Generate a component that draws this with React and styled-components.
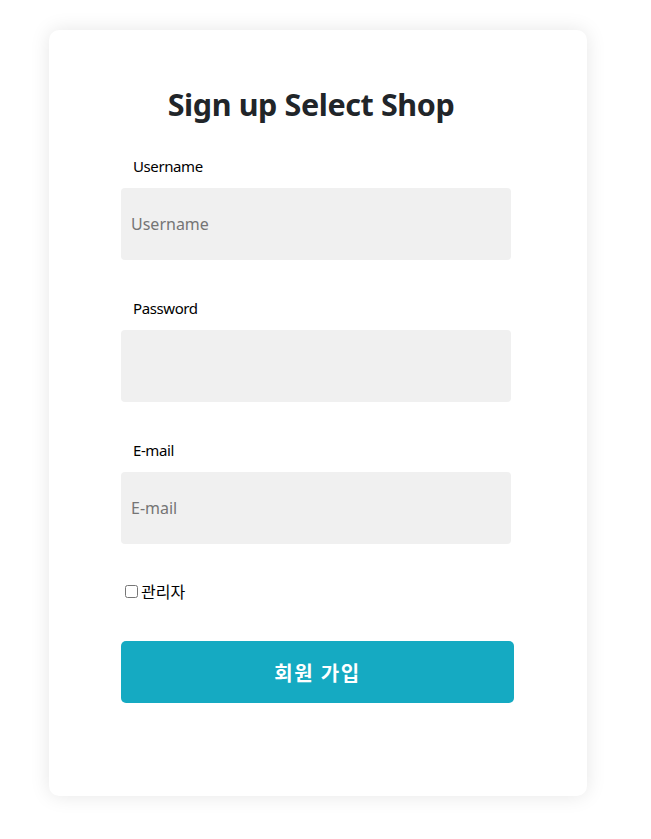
import React from "react";
import styled, { createGlobalStyle } from "styled-components";

const GlobalStyle = createGlobalStyle`
  body {
    margin: 0;
    background: #ffffff;
    font-family: "Noto Sans", "Noto Sans CJK KR", sans-serif;
  }
`;

const Page = styled.div`
  padding: 30px 0 30px 49px;
`;

const Card = styled.div`
  width: 538px;
  height: 766px;
  box-sizing: border-box;
  background: #ffffff;
  border-radius: 10px;
  box-shadow: 0 0 20px rgba(0, 0, 0, 0.1);
  padding: 52px 0 0 72px;
`;

const Form = styled.form`
  width: 393px;
  display: flex;
  flex-direction: column;
`;

const Title = styled.h2`
  margin: 0 0 30px;
  width: 380px;
  text-align: center;
  font-size: 30.5px;
  line-height: 44px;
  font-weight: 700;
  color: #212529;
  letter-spacing: -0.4px;
`;

const Field = styled.div`
  display: flex;
  flex-direction: column;
  margin-bottom: 38px;
`;

const Label = styled.label`
  padding-left: 12px;
  font-size: 15px;
  line-height: 20px;
  color: #000000;
  letter-spacing: -0.4px;
  margin-bottom: 12px;
`;

const Input = styled.input`
  width: 390px;
  height: 72px;
  box-sizing: border-box;
  border: none;
  border-radius: 4px;
  background: #f0f0f0;
  padding: 0 10px;
  font-family: inherit;
  font-size: 16px;
  color: #333;
  outline: none;
  &::placeholder {
    color: #757575;
  }
`;

const CheckRow = styled.label`
  display: flex;
  align-items: center;
  padding-left: 4px;
  margin-top: -3px;
  font-size: 16px;
  color: #000000;
  gap: 3px;
  input {
    margin: 0;
    width: 13px;
    height: 13px;
  }
`;

const SubmitButton = styled.button`
  margin-top: 38px;
  width: 393px;
  height: 62px;
  border: none;
  border-radius: 5px;
  background: #15aac2;
  color: #ffffff;
  font-family: inherit;
  font-size: 20px;
  font-weight: 700;
  letter-spacing: 1.5px;
  cursor: pointer;
`;

export default function App() {
  return (
    <Page>
      <GlobalStyle />
      <Card>
        <Form onSubmit={(e) => e.preventDefault()}>
          <Title>Sign up Select Shop</Title>
          <Field>
            <Label htmlFor="username">Username</Label>
            <Input id="username" type="text" placeholder="Username" />
          </Field>
          <Field>
            <Label htmlFor="password">Password</Label>
            <Input id="password" type="password" />
          </Field>
          <Field>
            <Label htmlFor="email">E-mail</Label>
            <Input id="email" type="text" placeholder="E-mail" />
          </Field>
          <CheckRow>
            <input type="checkbox" />
            관리자
          </CheckRow>
          <SubmitButton type="submit">회원 가입</SubmitButton>
        </Form>
      </Card>
    </Page>
  );
}
